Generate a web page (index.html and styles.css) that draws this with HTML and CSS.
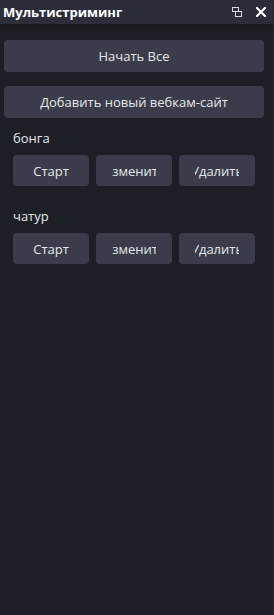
FILE: index.html
```html
<!DOCTYPE html>
<html lang="ru">
<head>
    <meta charset="UTF-8">
    <meta name="viewport" content="width=device-width, initial-scale=1.0">
    <title>Мультистриминг</title>
    <link rel="stylesheet" href="styles.css">
</head>
<body>
    <div class="dock">
        <div class="titlebar">
            <div class="title">Мультистриминг</div>
            <div class="title-icons">
                <svg class="icon" width="10" height="10" viewBox="0 0 10 10">
                    <rect x="0.5" y="0.5" width="6" height="4" fill="none" stroke="#d8d9dd" stroke-width="1"/>
                    <rect x="3.5" y="4.5" width="6" height="5" fill="#2b2e38" stroke="#d8d9dd" stroke-width="1"/>
                </svg>
                <svg class="icon" width="10" height="10" viewBox="0 0 10 10">
                    <path d="M1 1 L9 9 M9 1 L1 9" stroke="#ffffff" stroke-width="2.2" stroke-linecap="square"/>
                </svg>
            </div>
        </div>
        <div class="content">
            <div class="button wide"><div class="clip"><span>Начать Все</span></div></div>
            <div class="button wide"><div class="clip"><span>Добавить новый вебкам-сайт</span></div></div>

            <div class="site">
                <div class="site-name">бонга</div>
                <div class="row">
                    <div class="button small"><div class="clip"><span>Старт</span></div></div>
                    <div class="button small"><div class="clip"><span>Изменить</span></div></div>
                    <div class="button small"><div class="clip"><span>Удалить</span></div></div>
                </div>
            </div>

            <div class="site">
                <div class="site-name">чатур</div>
                <div class="row">
                    <div class="button small"><div class="clip"><span>Старт</span></div></div>
                    <div class="button small"><div class="clip"><span>Изменить</span></div></div>
                    <div class="button small"><div class="clip"><span>Удалить</span></div></div>
                </div>
            </div>
        </div>
    </div>
</body>
</html>
```

FILE: styles.css
```css
* {
    box-sizing: border-box;
}
html, body {
    margin: 0;
    height: 100%;
}
body {
    background-color: #1d1f26;
    font-family: "Open Sans", "Noto Sans", sans-serif;
    color: #e6e7ea;
}
.dock {
    height: 100%;
    border-right: 1px solid #2a2c34;
}
.titlebar {
    height: 24px;
    background-color: #2b2e38;
    border-bottom: 4px solid #1a1c22;
    box-sizing: content-box;
    display: flex;
    align-items: center;
    justify-content: space-between;
    padding: 0 7px 0 3px;
}
.title {
    font-weight: bold;
    font-size: 13px;
    color: #ffffff;
}
.title-icons {
    display: flex;
    align-items: center;
    gap: 14px;
}
.content {
    padding: 12px 9px 0 4px;
}
.button {
    background-color: #3a3d49;
    border-radius: 4px;
    display: flex;
    justify-content: center;
    align-items: center;
    font-size: 13px;
    color: #e6e7ea;
}
.button.wide {
    height: 32px;
    margin-bottom: 14px;
}
.clip {
    display: flex;
    justify-content: center;
    overflow: hidden;
    white-space: nowrap;
}
.clip span {
    flex-shrink: 0;
}
.button.small {
    width: 76px;
    height: 31px;
    padding: 0 16px;
}
.button.small .clip {
    width: 44px;
}
.site {
    padding-left: 9px;
    margin-bottom: 24px;
}
.site-name {
    font-size: 13px;
    height: 20px;
    line-height: 16px;
    margin-top: -2px;
    margin-bottom: 5px;
}
.row {
    display: flex;
    gap: 7px;
}
```
